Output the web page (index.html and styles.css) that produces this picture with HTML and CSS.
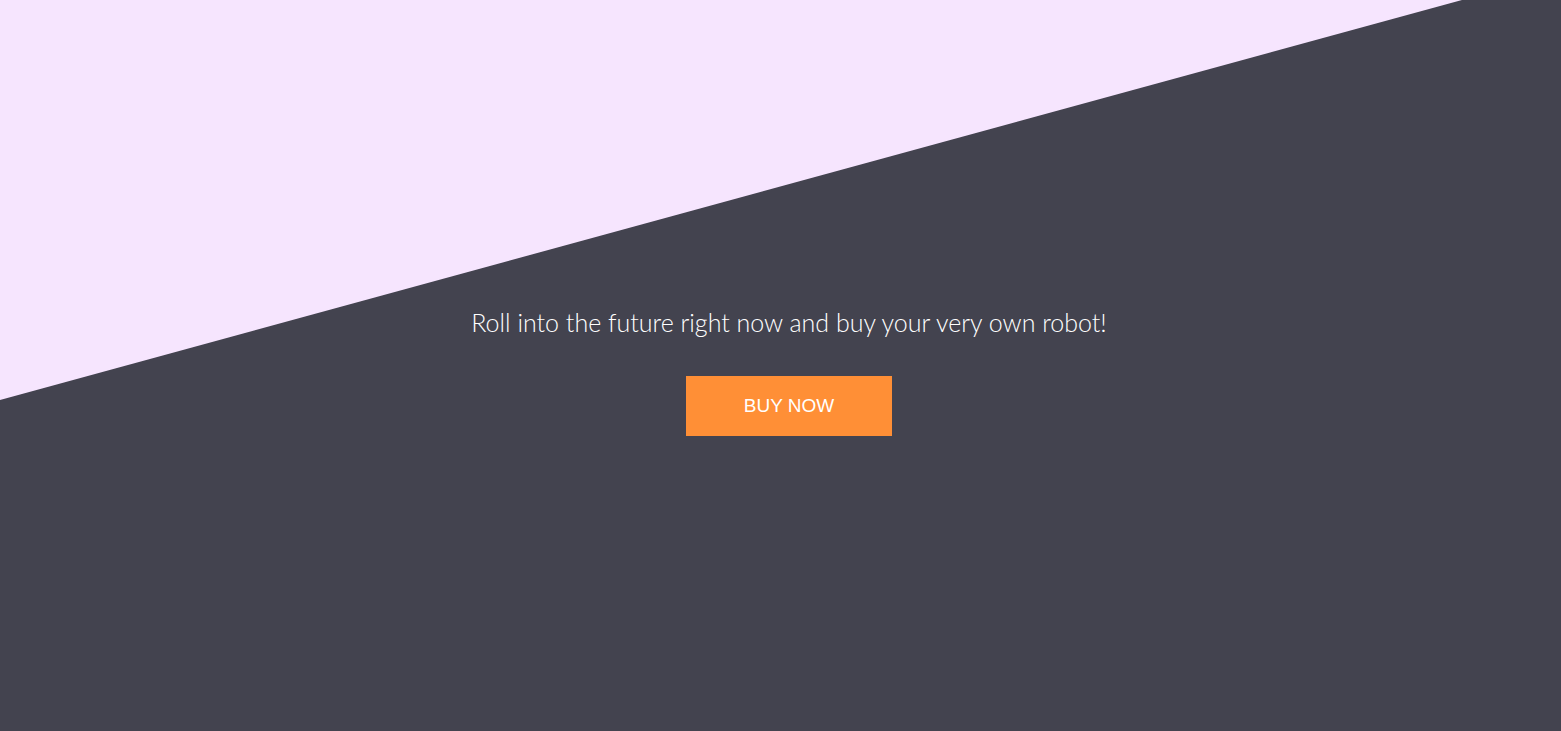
FILE: index.html
```html
<!DOCTYPE html>
<html lang="en">
<head>
<meta charset="utf-8">
<title>Buy a robot</title>
<link rel="stylesheet" href="styles.css">
</head>
<body>
<section class="hero">
  <div class="hero-bg"></div>
  <div class="hero-content">
    <p class="tagline">Roll into the future right now and buy your very own robot!</p>
    <a class="buy-btn" href="#">BUY NOW</a>
  </div>
</section>
</body>
</html>
```
FILE: styles.css
```css
* { box-sizing: border-box; }
html, body { margin: 0; padding: 0; }
body {
  background: #43434f;
  font-family: "Lato", "Liberation Sans", sans-serif;
}
.hero {
  position: relative;
  width: 100%;
  height: 731px;
  overflow: hidden;
}
.hero-bg {
  position: absolute;
  inset: 0;
  background: #f6e5fe;
  clip-path: polygon(0 0, 1462px 0, 0 400px);
}
.hero-content {
  position: relative;
  display: flex;
  flex-direction: column;
  align-items: center;
  padding-top: 307px;
  padding-left: 17px;
}
.tagline {
  margin: 0;
  color: #ffffff;
  font-family: "Lato", sans-serif;
  font-weight: 300;
  font-size: 25px;
  line-height: 30px;
}
.buy-btn {
  margin-top: 39px;
  display: flex;
  align-items: center;
  justify-content: center;
  width: 206px;
  height: 60px;
  background: #ff8f36;
  color: #ffffff;
  text-decoration: none;
  font-family: "Liberation Sans", Arial, sans-serif;
  font-size: 19px;
}
```
